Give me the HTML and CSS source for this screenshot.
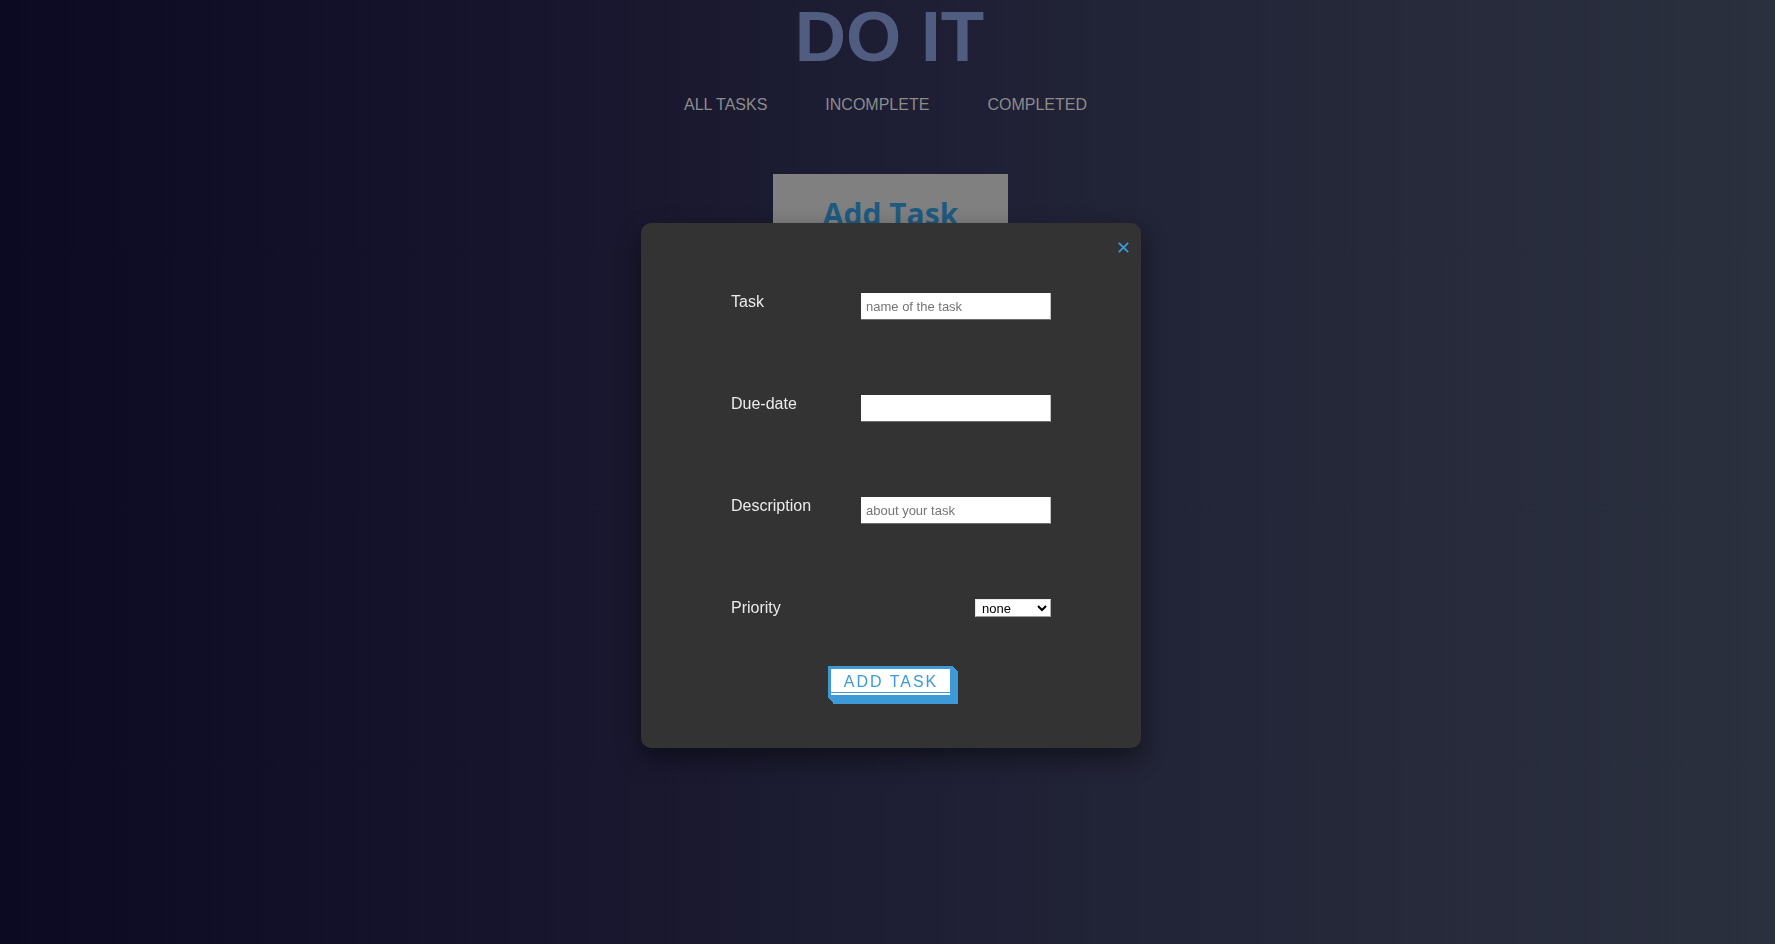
FILE: index.html
```html
<!DOCTYPE html>
<html lang="en">
<head>
<meta charset="utf-8">
<title>DO IT</title>
<link rel="stylesheet" href="styles.css">
</head>
<body>
<header class="header">
  <h1 class="title">DO IT</h1>
  <nav class="nav">
    <a class="nav-link" href="#">ALL TASKS</a>
    <a class="nav-link" href="#">INCOMPLETE</a>
    <a class="nav-link" href="#">COMPLETED</a>
  </nav>
</header>
<main class="main">
  <button class="open-btn" type="button">Add Task</button>
</main>

<div class="modal">
  <div class="modal-top">
    <button class="close-btn" type="button" aria-label="close">
      <svg width="11" height="11" viewBox="0 0 11 11"><path d="M0.8 0.8 L10.2 10.2 M10.2 0.8 L0.8 10.2" stroke="#3d9ad6" stroke-width="1.8" fill="none"/></svg>
    </button>
  </div>
  <form class="form">
    <div class="row">
      <label class="label">Task</label>
      <input class="field" type="text" placeholder="name of the task">
    </div>
    <div class="row">
      <label class="label">Due-date</label>
      <input class="field" type="text">
    </div>
    <div class="row">
      <label class="label">Description</label>
      <input class="field" type="text" placeholder="about your task">
    </div>
    <div class="row">
      <label class="label">Priority</label>
      <select class="select">
        <option>none</option>
        <option>low</option>
        <option>medium</option>
        <option>high</option>
      </select>
    </div>
  </form>
  <div class="actions">
    <button class="submit" type="button">ADD TASK</button>
  </div>
</div>
</body>
</html>
```
FILE: styles.css
```css
html, body {
  height: 100%;
}
body {
  margin: 0;
  min-height: 100vh;
  font-family: "Liberation Sans", Arial, sans-serif;
  background: linear-gradient(to right, #0c0922 0%, #17152d 30%, #1f2035 55%, #262a3a 80%, #2b303f 100%);
  overflow: hidden;
}
.header {
  display: flex;
  flex-direction: column;
  align-items: center;
}
.title {
  margin: 0;
  font-size: 71px;
  line-height: 73px;
  font-weight: 700;
  color: #515d80;
  padding-left: 4px;
}
.nav {
  display: flex;
  gap: 58px;
  margin-top: 23px;
  margin-right: 4px;
}
.nav-link {
  font-size: 16px;
  line-height: 18px;
  color: #8c8c8c;
  text-decoration: none;
}
.main {
  display: flex;
  justify-content: center;
  margin-top: 60px;
}
.open-btn {
  width: 235px;
  padding: 20px 0 12px 0;
  margin-left: 6px;
  border: 0;
  background: #808080;
  color: #1f5a80;
  font-family: "Open Sans", sans-serif;
  font-weight: 700;
  font-size: 30px;
  line-height: 40px;
}
.modal {
  position: fixed;
  top: 223px;
  left: 641px;
  width: 500px;
  box-sizing: border-box;
  padding: 19px 12px 50px 12px;
  background: #333333;
  border-radius: 10px;
  box-shadow: 0 10px 24px rgba(0, 0, 0, 0.45);
}
.modal-top {
  display: flex;
  justify-content: flex-end;
}
.close-btn {
  display: block;
  width: 11px;
  height: 11px;
  padding: 0;
  border: 0;
  background: none;
}
.close-btn svg {
  display: block;
}
.form {
  display: flex;
  flex-direction: column;
  gap: 74px;
  width: 320px;
  margin: 39px 0 0 78px;
}
.row {
  display: flex;
  justify-content: space-between;
  align-items: flex-start;
}
.label {
  padding-top: 1px;
  font-size: 16px;
  line-height: 18px;
  color: #ebebeb;
}
.field {
  box-sizing: border-box;
  width: 190px;
  height: 27px;
  margin: 1px 0 0 0;
  padding: 0 5px;
  border: 0;
  border-right: 1px solid #c0c0c0;
  border-bottom: 1px solid #6e6e6e;
  background: #ffffff;
  font-family: "Liberation Sans", Arial, sans-serif;
  font-size: 13px;
  color: #222;
  outline: none;
}
.field::placeholder {
  color: #757575;
}
.select {
  box-sizing: border-box;
  width: 76px;
  height: 18px;
  margin: 1px 0 0 0;
  padding: 0 0 0 2px;
  border: 1px solid #e8e8e8;
  border-bottom-color: #9a9a9a;
  border-right-color: #b0b0b0;
  border-radius: 0;
  background: #ffffff;
  font-family: "Liberation Sans", Arial, sans-serif;
  font-size: 13px;
  color: #000;
}
.actions {
  display: flex;
  justify-content: center;
  margin-top: 49px;
  margin-right: 2px;
}
.submit {
  box-sizing: border-box;
  width: 125px;
  height: 32px;
  padding: 0 0 0 2px;
  border: 3px solid #3d9ad6;
  background: #ffffff;
  color: #3d9ad6;
  font-family: "Liberation Sans", Arial, sans-serif;
  font-size: 16px;
  letter-spacing: 2px;
  box-shadow: inset 0 -2px 0 #ffffff, inset 0 -3px 0 #3d9ad6,
    1px 1px 0 #3d9ad6, 2px 2px 0 #3d9ad6, 3px 3px 0 #3d9ad6,
    4px 4px 0 #3d9ad6, 5px 5px 0 #3d9ad6, 5px 6px 0 #3d9ad6;
}
```
